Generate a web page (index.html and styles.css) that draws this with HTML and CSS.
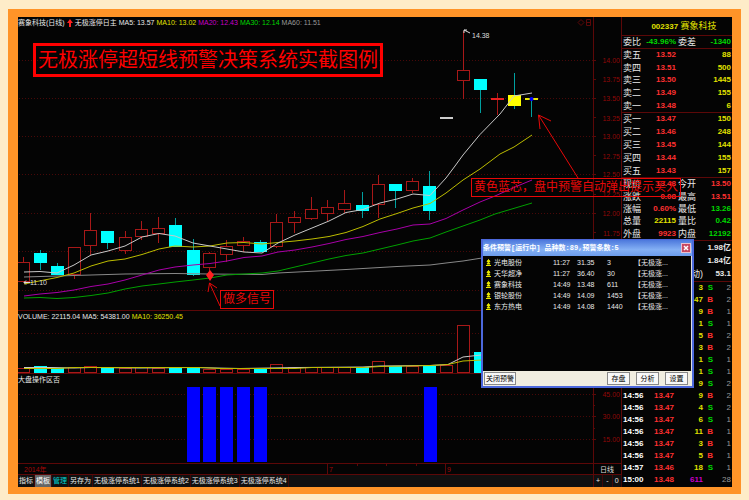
FILE: index.html
```html
<!DOCTYPE html>
<html lang="zh-CN">
<head>
  <meta charset="UTF-8">
  <meta name="viewport" content="width=device-width, initial-scale=1.0">
  <title>赛象科技(日线)</title>
  <link rel="stylesheet" href="styles.css">
</head>
<body>
  <main class="terminal">
    <div class="charts">
      <!-- Price -->
      <section class="panel">
        <svg class="plot" viewBox="18 17 604 294">
          <g class="grid-lines">
            <path d="M19 60.5H593M19 98.5H593M19 136.5H593M19 174.5H593M19 213.5H593M19 251.5H593M19 290.5H593"/>
          </g>
          <path class="axis-line" d="M593.5 17V311M621.5 17V311M18 310.5H622M593 60.5h3M593 79.5h3M593 98.5h3M593 117.5h3M593 136.5h3M593 155.5h3M593 174.5h3M593 194.5h3M593 213.5h3M593 232.5h3"/>
          <path class="axis-line" d="M578 22.5l3-3 3 3-3 3zM586.5 19.5h4v6h-4zM586.5 22.5h4"/>
          <g class="axis-text">
            <text x="620" y="63">14.00</text>
            <text x="620" y="82">13.75</text>
            <text x="620" y="101">13.50</text>
            <text x="620" y="121">13.25</text>
            <text x="620" y="139">13.00</text>
            <text x="620" y="159">12.75</text>
            <text x="620" y="177">12.50</text>
            <text x="620" y="197">12.25</text>
            <text x="620" y="216">12.00</text>
            <text x="620" y="236">11.75</text>
          </g>
          <g id="candles"></g>
          <g class="averages">
            <polyline class="ma60" points="24,277 74,275.5 125,274 175,273.5 210,274 262,274.5 278,273 346,269.5 397,266.5 430,265 446,263 463,261 482,258"/>
            <polyline class="ma30" points="24,298 40,297.5 57,298.5 74,297.5 91,295.5 108,293 125,289 142,286 159,284 175,282 193,280 210,278 227,275 244,274 262,273 278,271 295,267 312,263 329,259 346,255.5 363,253 380,249 397,245 413,241 430,238 446,232 463,226 480,220 495,214 532,203"/>
            <polyline class="ma20" points="24,296 40,294 57,292.5 74,290 91,286.5 108,284 125,280 142,275 159,270 175,267 193,265 210,263.5 227,261 244,257.5 262,256 278,252 295,250 312,247 329,243.5 346,239.5 363,236.5 380,232.5 397,229 413,225 430,224 446,218.5 463,210 480,202 495,196 515,187 532,180"/>
            <polyline class="ma10" points="24,284 57,277.5 74,273 91,266 108,261 125,259 142,254.5 159,249 175,246 193,247 210,246 227,243 244,242.5 262,244 278,242.5 295,241 312,239 329,236.5 346,232.5 363,226.5 380,219 397,213.5 413,208 430,203.5 446,193 463,180 480,169 500,154 514,147 532,135"/>
            <polyline class="ma5" points="24,272 40,271.5 57,273 74,265 91,255 108,251 125,246 142,237 159,233.5 175,236 193,243 210,246 227,249 244,252 262,253 278,243 295,235 312,228 329,221 346,212.5 363,209.5 380,203 397,199 413,194 430,195.5 446,178 455,166 463,155 480,134.5 500,114 514,96 532,93"/>
          </g>
          <!-- High and low marks -->
          <path class="mark-line" d="M464 33v-3h3M464 30l6 3M24 282.5h6M26 280.5l-2 2 2 2"/>
          <text class="mark-text" x="472" y="38">14.38</text>
          <text class="mark-text" x="30" y="285">11.10</text>
          <!-- Signal and arrows -->
          <path class="signal" d="M210 270l4 5-4 6-4-6z"/>
          <path class="arrow" d="M220 306L209.5 283M208 292L209.5 283L217 288M578 178L538.5 115M540 129L538.5 115L551 121"/>
        </svg>
        <header class="legend">
          <span>赛象科技(日线)</span>
          <svg class="up-icon" viewBox="0 0 6 8"><path d="M3 0l3 4H4v4H2V4H0z"/></svg>
          <span>无极涨停日主</span>
          <span>MA5: 13.57</span>
          <span class="yellow">MA10: 13.02</span>
          <span class="magenta">MA20: 12.43</span>
          <span class="green">MA30: 12.14</span>
          <span class="gray">MA60: 11.51</span>
        </header>
        <h1 class="headline">无极涨停超短线预警决策系统实截图例</h1>
        <p class="callout callout-buy">做多信号</p>
        <p class="callout callout-alert">黄色蓝芯，盘中预警自动弹出提示买入</p>
      </section>

      <!-- Volume -->
      <section class="panel">
        <svg class="plot" viewBox="18 311 604 63">
          <path class="grid-lines" d="M19 333.5H593M19 352.5H593"/>
          <path class="axis-line" d="M593.5 311V374M621.5 311V374M18 373.5H622"/>
          <g id="volumes"></g>
          <g class="averages">
            <polyline class="ma5" points="24,367.5 50,367.5 74,368 91,367.5 140,368 193,367.5 240,368.5 300,367.5 363,367 380,366 430,365.5 448,364.5 463,357 481,355"/>
            <polyline class="ma10" points="24,368.5 57,368.5 74,367.5 200,367.5 220,368.5 295,368.5 312,367.5 363,367.5 380,366.5 430,365.5 448,364.5 463,361 482,360"/>
          </g>
        </svg>
        <header class="legend">
          <span>VOLUME: 22115.04</span>
          <span>MA5: 54381.00</span>
          <span class="yellow">MA10: 36250.45</span>
        </header>
      </section>

      <!-- Indicator -->
      <section class="panel">
        <svg class="plot" viewBox="18 374 604 90">
          <path class="grid-lines" d="M19 394.5H593M19 416.5H593M19 439.5H593"/>
          <path class="axis-line" d="M593.5 374V464M621.5 374V464M18 463.5H622M593 394.5h3M593 405.5h2M593 416.5h3M593 428.5h2M593 439.5h3"/>
          <g class="axis-text">
            <text x="620" y="397">45.00</text>
            <text x="620" y="419">30.00</text>
            <text x="620" y="442">15.00</text>
          </g>
          <g id="zones"></g>
        </svg>
        <header class="legend">
          <span>大盘操作区否</span>
        </header>
      </section>

      <!-- Time axis -->
      <section class="panel">
        <svg class="plot" viewBox="18 464 604 11">
          <path class="axis-line" d="M18 474.5H622M327.5 464V474M445.5 464V474M357.5 464v2M386.5 464v2M416.5 464v2M593.5 464V475M621.5 464V475"/>
          <g class="time-text">
            <text x="24" y="472">2014年</text>
            <text x="329" y="472">7</text>
            <text x="447" y="472">9</text>
          </g>
          <text class="period-text" x="600" y="472">日线</text>
        </svg>
      </section>

      <nav class="tabs">
        <button type="button">指标</button>
        <button type="button" class="active">模板</button>
        <button type="button" class="cyan">管理</button>
        <button type="button">另存为</button>
        <button type="button">无极涨停系统1</button>
        <button type="button">无极涨停系统2</button>
        <button type="button">无极涨停系统3</button>
        <button type="button">无极涨停系统4</button>
        <div class="zoom-keys">
          <button type="button">+</button>
          <button type="button">-</button>
          <button type="button">0</button>
        </div>
      </nav>
    </div>

    <!-- Quotes -->
    <aside class="quotes">
      <h2 class="stock"><b>002337</b> 赛象科技</h2>
      <div class="block ratio">
        <div class="quote"><span>委比</span><b class="green">-43.96%</b><span>委差</span><b class="green">-1340</b></div>
      </div>
      <div class="block asks">
        <div class="quote"><span>卖五</span><b class="red">13.52</b><i></i><b class="yellow">88</b></div>
        <div class="quote"><span>卖四</span><b class="red">13.51</b><i></i><b class="yellow">500</b></div>
        <div class="quote"><span>卖三</span><b class="red">13.50</b><i></i><b class="yellow">1445</b></div>
        <div class="quote"><span>卖二</span><b class="red">13.49</b><i></i><b class="yellow">155</b></div>
        <div class="quote"><span>卖一</span><b class="red">13.48</b><i></i><b class="yellow">6</b></div>
      </div>
      <div class="block bids">
        <div class="quote"><span>买一</span><b class="red">13.47</b><i></i><b class="yellow">150</b></div>
        <div class="quote"><span>买二</span><b class="red">13.46</b><i></i><b class="yellow">248</b></div>
        <div class="quote"><span>买三</span><b class="red">13.45</b><i></i><b class="yellow">144</b></div>
        <div class="quote"><span>买四</span><b class="red">13.44</b><i></i><b class="yellow">155</b></div>
        <div class="quote"><span>买五</span><b class="red">13.43</b><i></i><b class="yellow">157</b></div>
      </div>
      <div class="block info">
        <div class="quote"><span>现价</span><b class="red">13.48</b><span>今开</span><b class="red">13.50</b></div>
        <div class="quote"><span>涨跌</span><b class="red">0.08</b><span>最高</span><b class="red">13.51</b></div>
        <div class="quote"><span>涨幅</span><b class="red">0.60%</b><span>最低</span><b class="green">13.26</b></div>
        <div class="quote"><span>总量</span><b class="yellow">22115</b><span>量比</span><b class="green">0.42</b></div>
        <div class="quote"><span>外盘</span><b class="red">9923</b><span>内盘</span><b class="green">12192</b></div>
      </div>
      <div class="block shares">
        <div class="share"><span></span><b>1.98亿</b></div>
        <div class="share"><span></span><b>1.84亿</b></div>
        <div class="share"><span>动)</span><b>53.1</b></div>
      </div>
      <table class="tape">
        <tbody id="tape"></tbody>
      </table>
    </aside>

    <!-- Alert window -->
    <section class="dialog">
      <header class="dialog-title">
        <h2>条件预警[运行中] 品种数:89,预警条数:5</h2>
        <button type="button" class="close" aria-label="关闭">
          <svg viewBox="0 0 8 8"><path d="M2 2l4 4M6 2l-4 4"/></svg>
        </button>
      </header>
      <div class="dialog-body">
        <table class="alerts">
          <tbody id="alerts"></tbody>
        </table>
      </div>
      <footer class="dialog-footer">
        <button type="button" class="wide">关闭预警</button>
        <button type="button">存盘</button>
        <button type="button">分析</button>
        <button type="button">设置</button>
      </footer>
    </section>
  </main>

  <script src="script.js"></script>
</body>
</html>
```

FILE: styles.css
```css
* {
  margin: 0;
  padding: 0;
  box-sizing: border-box;
}
body {
  background: #feecc8;
  font-family: 'Liberation Sans', 'Noto Sans CJK SC', sans-serif;
  font-size: 7px;
  line-height: 12px;
  color: #e8e8e8;
}
button {
  font: inherit;
  color: inherit;
  background: none;
  border: none;
  white-space: nowrap;
  cursor: pointer;
}
table {
  border-collapse: collapse;
}

.terminal {
  position: relative;
  display: grid;
  grid-template-columns: 1fr 110px;
  margin: 9px 8px 6px;
  border: solid #ff9428;
  border-width: 8px 9px 7px 10px;
  background: #040404;
}

/* Colors */
.red { color: #ff3030; }
.green { color: #00d800; }
.yellow { color: #e0e000; }
.magenta { color: #c800c8; }
.tabs .cyan { color: #00d0d0; }
.gray { color: #999; }

/* Chart panels: the legend sits over the plot */
.panel {
  position: relative;
  display: grid;
}
.plot {
  grid-area: 1 / 1;
  display: block;
  width: 100%;
}
.legend {
  grid-area: 1 / 1;
  align-self: start;
  display: flex;
  align-items: center;
  gap: 2px;
  height: 12px;
  white-space: nowrap;
}
.up-icon {
  width: 6px;
  height: 8px;
  fill: #ff2020;
}
.grid-lines {
  stroke: #480808;
  stroke-dasharray: 1 2;
  fill: none;
}
.axis-line {
  stroke: #5c0808;
  fill: none;
}
.axis-text {
  fill: #900808;
  text-anchor: end;
}
.time-text { fill: #a00808; }
.period-text,
.mark-text { fill: #ddd; }
.mark-line {
  stroke: #ddd;
  fill: none;
}
.averages {
  fill: none;
  stroke-width: 1;
}
.ma5 { stroke: #c8c8c8; }
.ma10 { stroke: #bcbc00; }
.ma20 { stroke: #a800a8; }
.ma30 { stroke: #00a000; }
.ma60 { stroke: #888; }
.up {
  fill: #040404;
  stroke: #a81818;
}
.down {
  fill: #00ffff;
  stroke: #00ffff;
}
.up-wick { stroke: #a81818; }
.down-wick { stroke: #00a0a0; }
.warn {
  fill: #ffff00;
  stroke: #ffff00;
}
.dash-white { stroke: #ccc; stroke-width: 2; }
.dash-red { stroke: #e82020; stroke-width: 2; }
.dash-yellow { stroke: #e8e800; stroke-width: 2; }
.core { fill: #0000ff; }
.zone { fill: #0000ff; }
.signal { fill: #ff2020; }
.arrow {
  stroke: #e80808;
  stroke-width: 1;
  fill: none;
}

/* Red notes over the chart */
.headline {
  position: absolute;
  top: 26px;
  left: 15px;
  padding: 0 2px;
  border: 3px solid #ff0000;
  font-size: 20px;
  font-weight: normal;
  line-height: 28px;
  color: #ff0000;
  white-space: nowrap;
}
.callout {
  position: absolute;
  z-index: 1;
  padding: 0 2px;
  border: 1px solid #e80808;
  font-size: 12px;
  line-height: 17px;
  color: #e80808;
  white-space: nowrap;
}
.callout-buy {
  top: 273px;
  left: 202px;
}
.callout-alert {
  top: 161px;
  left: 453px;
}

/* Bottom tabs */
.tabs {
  display: flex;
  height: 12px;
  background: #101010;
}
.tabs button {
  padding: 0 1px;
  border-right: 1px solid #400808;
}
.tabs .active {
  background: #666;
  color: #fff;
}
.zoom-keys {
  display: grid;
  grid-template-columns: repeat(3, 1fr);
  width: 29px;
  margin-left: auto;
  border-left: 1px solid #5c0808;
}

/* Quotes */
.quotes {
  display: flex;
  flex-direction: column;
  font-size: 8px;
}
.stock {
  height: 19px;
  padding-left: 14px;
  border-bottom: 1px solid #5c0808;
  font-size: 9px;
  font-weight: normal;
  line-height: 19px;
  text-align: center;
  color: #e0e000;
}
.stock b {
  font-size: 8px;
}
.block {
  display: flex;
  flex-direction: column;
  justify-content: space-around;
  border-bottom: 1px solid #5c0808;
}
.ratio { height: 13px; }
.asks { height: 64px; }
.bids { height: 65px; }
.info { height: 63px; }
.shares { height: 41px; }
.quote {
  display: grid;
  grid-template-columns: 18px 35px 21px 1fr;
  padding: 0 1px;
}
.quote span {
  font-size: 9px;
}
.quote b {
  text-align: right;
}
.quote span + b + span {
  padding-left: 2px;
}
.share {
  display: grid;
  grid-template-columns: 80px 1fr;
  padding: 0 1px;
  font-size: 9px;
  text-align: right;
}
.share b {
  font-size: 8px;
}
.tape {
  width: 100%;
  table-layout: fixed;
  font-weight: bold;
}
.tape td {
  height: 12px;
  text-align: right;
}
.tape td:nth-child(1) {
  width: 22px;
  text-align: left;
  padding-left: 1px;
  color: #fff;
}
.tape td:nth-child(2) { width: 30px; }
.tape td:nth-child(3) { width: 29px; }
.tape td:nth-child(4) { width: 10px; }
.tape td:nth-child(5) {
  padding-right: 1px;
  font-weight: normal;
}

/* Alert window */
.dialog {
  position: absolute;
  z-index: 2;
  top: 222px;
  right: 38px;
  display: flex;
  flex-direction: column;
  width: 213px;
  border: 2px solid #4c68dc;
  border-top-width: 1px;
  background: #040404;
}
.dialog-title {
  display: flex;
  align-items: center;
  justify-content: space-between;
  height: 16px;
  padding-right: 1px;
  background: linear-gradient(#4c78dc, #84b0f4 60%, #6c9cec);
  color: #fff;
}
.dialog-title h2 {
  font-family: 'Liberation Mono', 'Noto Sans CJK SC', monospace;
  font-size: 7px;
  white-space: nowrap;
}
.close {
  width: 10px;
  height: 10px;
  border: 1px solid #e8c0d0;
  background: #c84860;
}
.close svg {
  display: block;
  stroke: #fff;
  stroke-width: 1.5;
}
.dialog-body {
  height: 115px;
  padding-top: 1px;
  border-right: 1px solid #ddd;
}
.alerts {
  width: 100%;
  table-layout: fixed;
  white-space: nowrap;
}
.alerts td {
  height: 11px;
  line-height: 11px;
}
.alerts td:nth-child(1) {
  width: 11px;
  padding-left: 3px;
}
.alerts td:nth-child(2) { width: 59px; }
.alerts td:nth-child(3) { width: 24px; }
.alerts td:nth-child(4) { width: 30px; }
.alerts td:nth-child(5) { width: 27px; }
.rise-icon {
  display: block;
  width: 5px;
  height: 7px;
  stroke: #e8e800;
  fill: #e8e800;
}
.dialog-footer {
  display: flex;
  align-items: center;
  gap: 6px;
  height: 15px;
  padding: 0 4px 0 1px;
  background: #f0ede0;
  color: #000;
}
.dialog-footer button {
  width: 23px;
  height: 13px;
  border: 1px solid #888;
  background: #f8f8f8;
  line-height: 11px;
}
.dialog-footer .wide {
  width: 32px;
  margin-right: auto;
}
```

FILE: script.js
```javascript
// type, left x, body top, body bottom, wick top, wick bottom, volume top
const days = [
  ['up', 17, 262, 281, 257, 281, 368],
  ['down', 34, 253, 262, 250, 270, 366],
  ['down', 51, 266, 274, 263, 275, 368],
  ['up', 68, 247, 274, 247, 279, 367],
  ['up', 84, 230, 245, 213, 255, 366],
  ['down', 101, 231, 242, 231, 249, 367],
  ['up', 119, 237, 250, 231, 254, 368],
  ['up', 135, 229, 236, 221, 240, 367],
  ['up', 152, 228, 233, 217, 243, 368],
  ['down', 169, 225, 246, 218, 247, 368],
  ['down', 187, 250, 274, 239, 276, 368],
  ['up', 203, 253, 267, 252, 274, 369],
  ['up', 220, 246, 254, 240, 262, 369],
  ['up', 237, 241, 245, 237, 252, 369],
  ['down', 254, 242, 251, 240, 252, 369],
  ['up', 270, 222, 246, 214, 248, 364],
  ['up', 288, 217, 222, 211, 233, 367],
  ['up', 305, 209, 218, 197, 220, 367],
  ['up', 321, 207, 213, 200, 221, 367],
  ['up', 338, 203, 209, 190, 213, 367],
  ['down', 356, 205, 210, 192, 218, 367],
  ['up', 372, 184, 204, 175, 218, 361],
  ['down', 389, 184, 190, 184, 208, 366],
  ['up', 406, 181, 190, 178, 193, 366],
  ['down', 423, 186, 210, 171, 220, 366],
  ['dash-white', 440, 118, 118, 118, 118, 365],
  ['up', 457, 70, 80, 31, 99, 325],
  ['down', 474, 79, 89, 79, 113, 352],
  ['dash-red', 491, 99, 99, 93, 115],
  ['warn', 508, 95, 105, 73, 109],
  ['dash-yellow', 525, 99, 99, 99, 117]
];

let candles = '';
let volumes = '';
days.forEach(([type, x, top, bottom, high, low, volume]) => {
  const mid = x + 6.5;
  const red = type === 'up' || type === 'dash-red';
  candles += `<path class="${red ? 'up-wick' : 'down-wick'}" d="M${mid} ${high}V${low}"/>`;
  if (type.startsWith('dash')) {
    candles += `<path class="${type}" d="M${x} ${top}h13"/>`;
  } else {
    candles += `<rect class="${type}" x="${x + 0.5}" y="${top + 0.5}" width="12" height="${bottom - top}"/>`;
  }
  if (volume) {
    const kind = type === 'down' ? 'down' : 'up';
    volumes += `<rect class="${kind}" x="${x + 0.5}" y="${volume + 0.5}" width="12" height="${372 - volume}"/>`;
  }
});
candles += '<circle class="core" cx="531.5" cy="99" r="2"/>';
document.getElementById('candles').innerHTML = candles;
document.getElementById('volumes').innerHTML = volumes;

document.getElementById('zones').innerHTML = [187, 203, 220, 237, 254, 424]
  .map(x => `<rect class="zone" x="${x}" y="387" width="13" height="75"/>`)
  .join('');

// time, price, lots, side, trades
const trades = [
  ['', '', 3, 'S', 2],
  ['', '', 47, 'B', 2],
  ['', '', 9, 'B', 1],
  ['', '', 1, 'S', 1],
  ['', '', 5, 'B', 2],
  ['', '', 3, 'B', 2],
  ['', '', 1, 'S', 1],
  ['', '', 1, 'S', 1],
  ['', '', 9, 'S', 2],
  ['14:56', '13.47', 9, 'B', 2],
  ['14:56', '13.47', 4, 'S', 2],
  ['14:56', '13.47', 6, 'S', 1],
  ['14:56', '13.47', 11, 'B', 1],
  ['14:56', '13.47', 3, 'B', 1],
  ['14:56', '13.47', 5, 'B', 1],
  ['14:57', '13.46', 18, 'S', 1],
  ['15:00', '13.48', 611, '', 28]
];
document.getElementById('tape').innerHTML = trades
  .map(([time, price, lots, side, count]) => `<tr>
    <td>${time}</td>
    <td class="red">${price}</td>
    <td class="${side ? 'yellow' : 'magenta'}">${lots}</td>
    <td class="${side === 'B' ? 'red' : 'green'}">${side}</td>
    <td class="gray">${count}</td>
  </tr>`)
  .join('');

const alerts = [
  ['光电股份', '11:27', '31.35', 3],
  ['天华超净', '11:27', '36.40', 30],
  ['赛象科技', '14:49', '13.48', 611],
  ['银轮股份', '14:49', '14.09', 1453],
  ['东方热电', '14:49', '14.08', 1440]
];
const riseIcon = '<svg class="rise-icon" viewBox="0 0 5 7"><path d="M1 2.5l1.5-2 1.5 2zM1 5l1.5-2 1.5 2zM0 6.5h5"/></svg>';
document.getElementById('alerts').innerHTML = alerts
  .map(([name, time, price, count]) => `<tr>
    <td>${riseIcon}</td>
    <td>${name}</td>
    <td>${time}</td>
    <td>${price}</td>
    <td>${count}</td>
    <td>【无极涨...</td>
  </tr>`)
  .join('');
```
